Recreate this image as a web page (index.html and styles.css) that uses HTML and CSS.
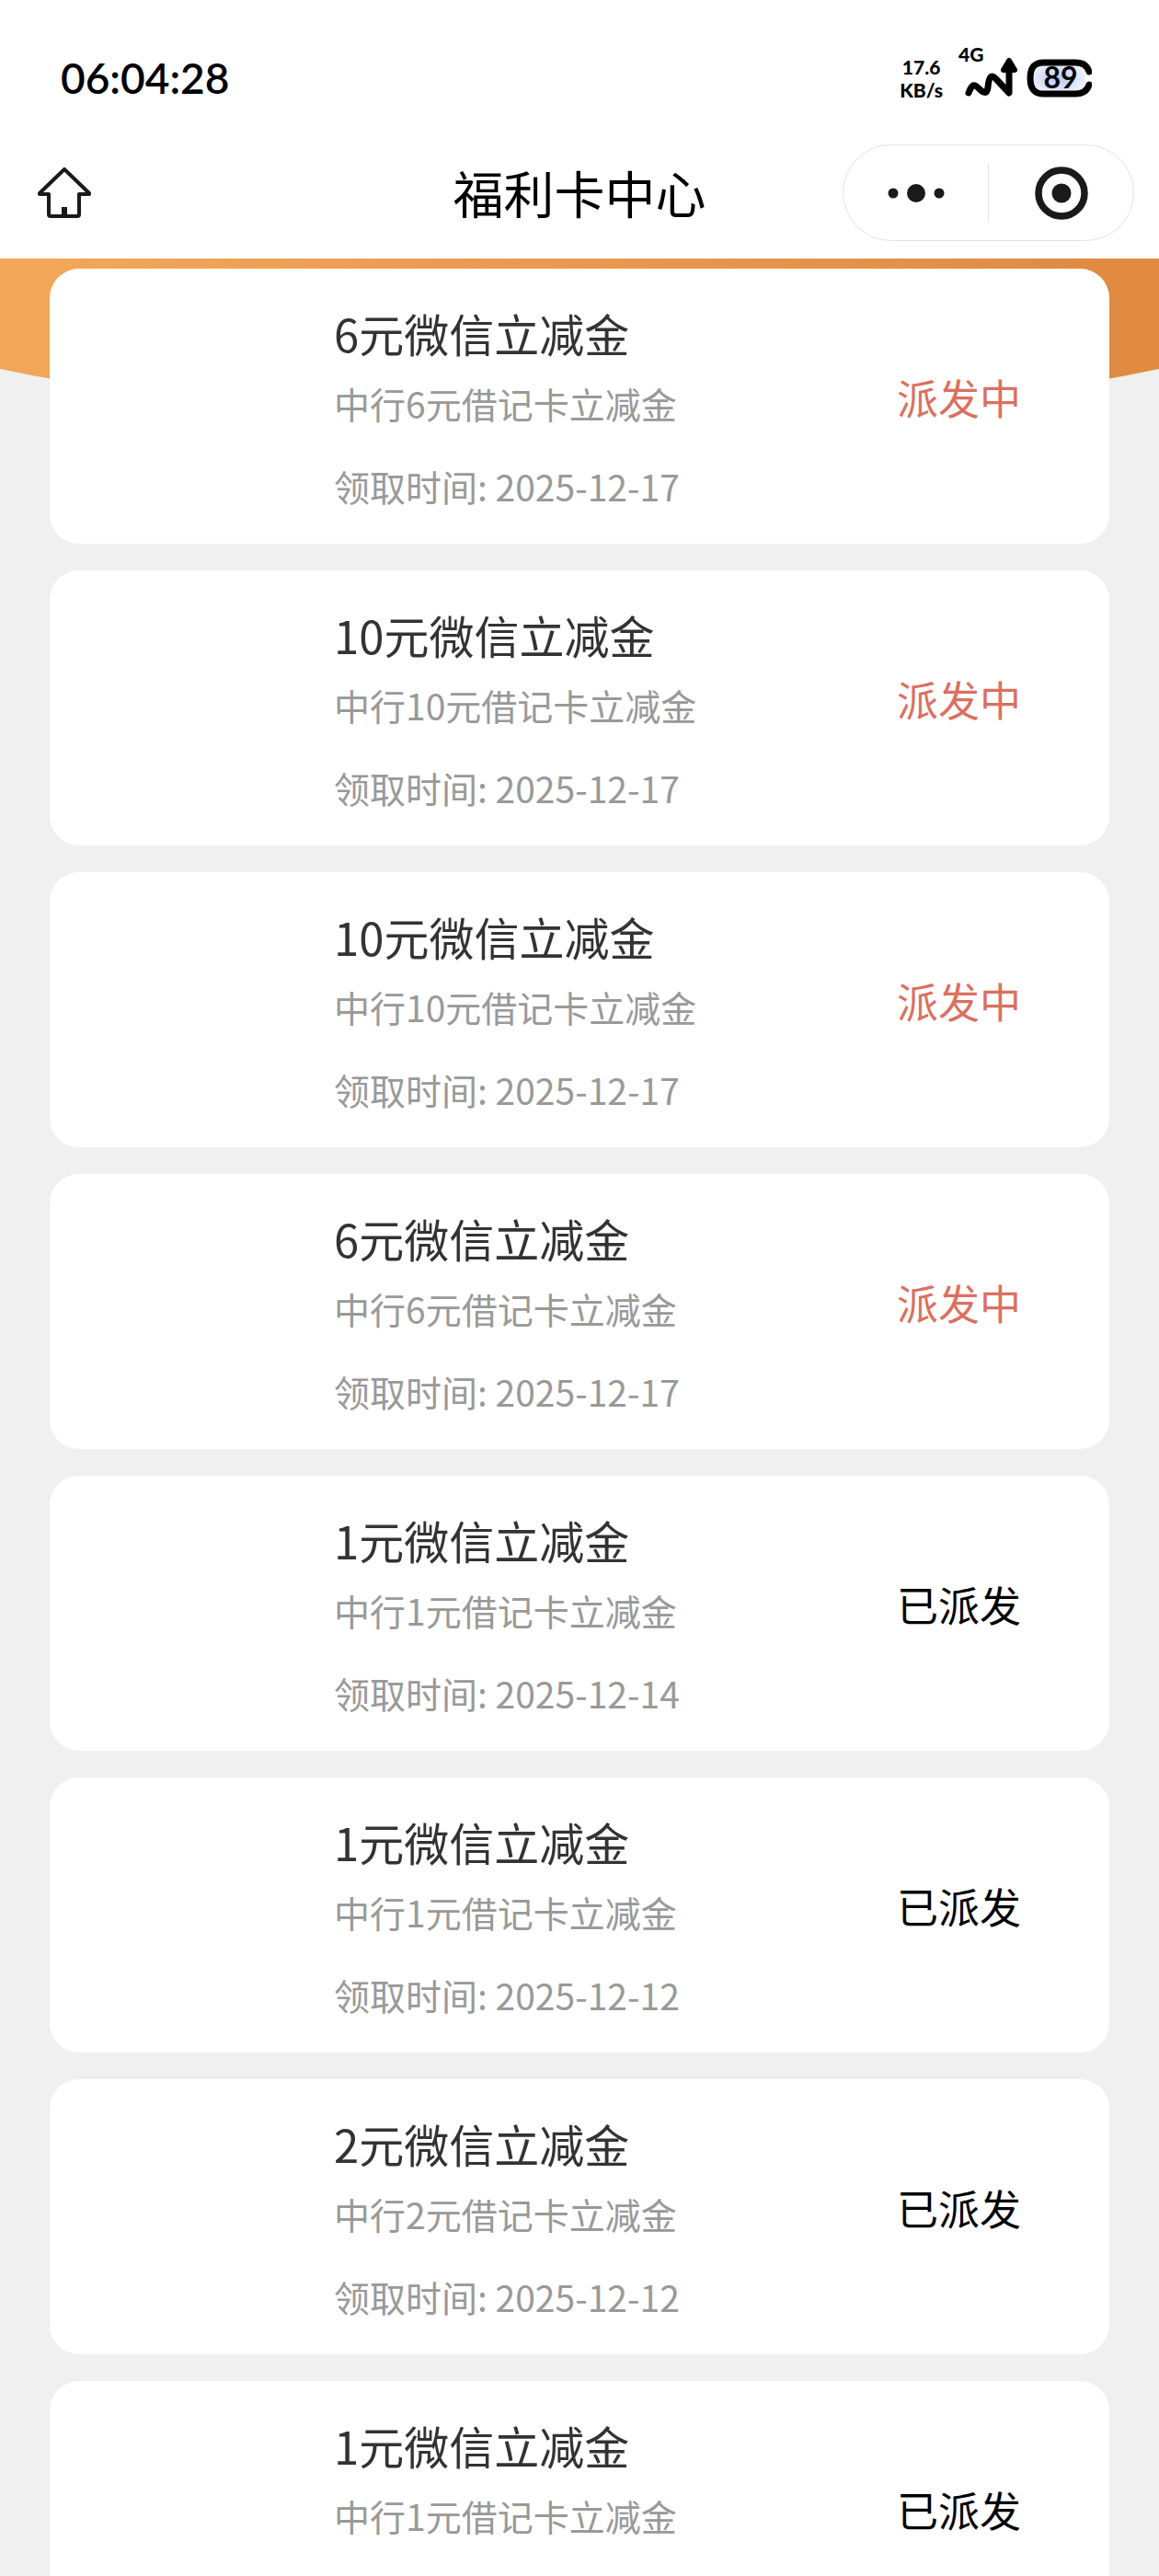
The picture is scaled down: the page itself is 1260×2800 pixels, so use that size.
FILE: index.html
```html
<!DOCTYPE html>
<html lang="zh-CN">
<head>
    <meta charset="UTF-8">
    <meta name="viewport" content="width=device-width, initial-scale=1.0">
    <title>福利卡中心</title>
    <link rel="stylesheet" href="styles.css">
</head>
<body>
    <header class="topbar">
        <div class="status-bar">
            <time class="clock">06:04:28</time>
            <div class="indicators">
                <div class="speed">
                    <span class="speed-value">17.6</span>
                    <span class="speed-unit">KB/s</span>
                </div>
                <svg class="signal" viewBox="0 -5 70 80" width="70" height="80">
                    <text class="network" x="2" y="17">4G</text>
                    <path d="M13 51 C17 41 19 41 24 46 C29 51 33 53 34 45 C35 33 38 30 43 36 L57 51 V24" fill="none" stroke="#000" stroke-width="7" stroke-linecap="round" stroke-linejoin="round"/>
                    <path d="M57 16 L63 26 H51 Z" stroke="#000" stroke-width="6" stroke-linejoin="round"/>
                </svg>
                <svg class="battery" viewBox="0 0 71 42" width="71" height="42">
                    <defs>
                        <radialGradient id="glow">
                            <stop offset="0" stop-color="#b9c6f3"/>
                            <stop offset="1" stop-color="#eef1fd"/>
                        </radialGradient>
                    </defs>
                    <rect x="4" y="4" width="60" height="34" rx="14" fill="url(#glow)"/>
                    <path d="M68 14 C66 7 61 4 53 4 H19 C9 4 4 9 4 21 C4 33 9 38 19 38 H53 C61 38 66 35 68 28" fill="none" stroke="#000" stroke-width="7" stroke-linecap="round"/>
                    <text class="battery-level" x="37" y="32" text-anchor="middle">89</text>
                </svg>
            </div>
        </div>
        <nav class="navbar">
            <button class="home-btn" type="button" aria-label="首页">
                <svg viewBox="0 0 58 56" width="58" height="56" fill="none" stroke="#1a1a1a" stroke-width="4" stroke-linejoin="round">
                    <path d="M29 2 L2 28 V29 H12 V51 Q12 53 14 53 H43 Q45 53 45 51 V29 H56 V28 Z"/>
                    <path d="M29 43 V53" stroke-width="6"/>
                </svg>
            </button>
            <h1 class="page-title">福利卡中心</h1>
            <div class="capsule">
                <button class="capsule-btn" type="button" aria-label="更多">
                    <svg viewBox="0 0 62 20" width="62" height="20" fill="#1a1a1a">
                        <circle cx="6" cy="10" r="5.5"/>
                        <circle cx="31" cy="10" r="10"/>
                        <circle cx="56" cy="10" r="5.5"/>
                    </svg>
                </button>
                <button class="capsule-btn" type="button" aria-label="关闭">
                    <svg viewBox="0 0 58 58" width="58" height="58">
                        <circle cx="29" cy="29" r="25" fill="none" stroke="#1a1a1a" stroke-width="7.5"/>
                        <circle cx="29" cy="29" r="10.5" fill="#1a1a1a"/>
                    </svg>
                </button>
            </div>
        </nav>
    </header>

    <main class="content">
        <ul class="card-list">
            <li class="card">
                <div class="card-info">
                    <h2 class="card-title">6元微信立减金</h2>
                    <p class="card-desc">中行6元借记卡立减金</p>
                    <p class="card-date">领取时间: 2025-12-17</p>
                </div>
                <span class="card-status pending">派发中</span>
            </li>
            <li class="card">
                <div class="card-info">
                    <h2 class="card-title">10元微信立减金</h2>
                    <p class="card-desc">中行10元借记卡立减金</p>
                    <p class="card-date">领取时间: 2025-12-17</p>
                </div>
                <span class="card-status pending">派发中</span>
            </li>
            <li class="card">
                <div class="card-info">
                    <h2 class="card-title">10元微信立减金</h2>
                    <p class="card-desc">中行10元借记卡立减金</p>
                    <p class="card-date">领取时间: 2025-12-17</p>
                </div>
                <span class="card-status pending">派发中</span>
            </li>
            <li class="card">
                <div class="card-info">
                    <h2 class="card-title">6元微信立减金</h2>
                    <p class="card-desc">中行6元借记卡立减金</p>
                    <p class="card-date">领取时间: 2025-12-17</p>
                </div>
                <span class="card-status pending">派发中</span>
            </li>
            <li class="card">
                <div class="card-info">
                    <h2 class="card-title">1元微信立减金</h2>
                    <p class="card-desc">中行1元借记卡立减金</p>
                    <p class="card-date">领取时间: 2025-12-14</p>
                </div>
                <span class="card-status">已派发</span>
            </li>
            <li class="card">
                <div class="card-info">
                    <h2 class="card-title">1元微信立减金</h2>
                    <p class="card-desc">中行1元借记卡立减金</p>
                    <p class="card-date">领取时间: 2025-12-12</p>
                </div>
                <span class="card-status">已派发</span>
            </li>
            <li class="card">
                <div class="card-info">
                    <h2 class="card-title">2元微信立减金</h2>
                    <p class="card-desc">中行2元借记卡立减金</p>
                    <p class="card-date">领取时间: 2025-12-12</p>
                </div>
                <span class="card-status">已派发</span>
            </li>
            <li class="card">
                <div class="card-info">
                    <h2 class="card-title">1元微信立减金</h2>
                    <p class="card-desc">中行1元借记卡立减金</p>
                </div>
                <span class="card-status">已派发</span>
            </li>
        </ul>
    </main>
</body>
</html>
```
FILE: styles.css
```css
* {
    box-sizing: border-box;
}

body {
    font-family: "Noto Sans CJK SC", sans-serif;
    margin: 0;
    background-color: #f0f0f0;
    display: flex;
    flex-direction: column;
    height: 100vh;
    overflow: hidden;
}

h1,
h2,
p,
ul {
    margin: 0;
    padding: 0;
    font-weight: 400;
}

button {
    border: none;
    background: none;
    padding: 0;
    cursor: pointer;
}

svg {
    display: block;
}

.topbar {
    flex: none;
    background-color: white;
}

.status-bar {
    display: flex;
    align-items: center;
    justify-content: space-between;
    padding: 45px 73px 0 66px;
    font-family: Lato, sans-serif;
    font-weight: 700;
    color: #000;
}

.clock {
    font-size: 46px;
    font-weight: 600;
    line-height: 60px;
}

.indicators {
    display: flex;
    align-items: center;
}

.speed {
    display: flex;
    flex-direction: column;
    align-items: center;
    margin-right: 15px;
    font-size: 21px;
    font-weight: 900;
    line-height: 25px;
}

.signal {
    margin-right: 6px;
}

.network {
    font-size: 21px;
    font-weight: 900;
}

.battery-level {
    font-size: 32px;
}

.navbar {
    display: grid;
    grid-template-columns: 1fr auto 1fr;
    align-items: center;
    padding: 32px 27px 19px;
}

.home-btn {
    justify-self: start;
    padding-left: 14px;
}

.page-title {
    padding-bottom: 4px;
    font-size: 55px;
    line-height: 80px;
}

.capsule {
    justify-self: end;
    display: flex;
    align-items: center;
    width: 317px;
    height: 105px;
    border: 1px solid #e4e4e4;
    border-radius: 53px;
}

.capsule-btn {
    flex: 1;
    height: 63px;
    display: flex;
    align-items: center;
    justify-content: center;
}

.capsule-btn + .capsule-btn {
    border-left: 1px solid #e4e4e4;
}

.content {
    position: relative;
    flex: 1;
    min-height: 0;
    overflow: hidden;
    padding: 11px 54px 0;
}

/* curved banner behind the first card */
.content::before {
    content: "";
    position: absolute;
    top: 0;
    left: 0;
    right: 0;
    height: 200px;
    background: linear-gradient(to right, #f2a659 5%, #e18b42 95%);
    clip-path: ellipse(100% 455px at 50% -274px);
}

.card-list {
    position: relative;
    display: flex;
    flex-direction: column;
    gap: 29px;
    list-style: none;
}

.card {
    display: flex;
    align-items: flex-start;
    justify-content: space-between;
    min-height: 299px;
    padding: 38px 96px 0 309px;
    background-color: white;
    border-radius: 32px;
}

.card-title {
    font-size: 49px;
    line-height: 64px;
    color: #333;
}

.card-desc,
.card-date {
    font-size: 39px;
    line-height: 52px;
    color: #999;
}

.card-desc {
    margin-top: 18px;
}

.card-date {
    margin-top: 38px;
}

.card-status {
    margin-top: 72px;
    font-size: 45px;
    line-height: 60px;
    color: #000;
}

.card-status.pending {
    color: #db705f;
}
```
